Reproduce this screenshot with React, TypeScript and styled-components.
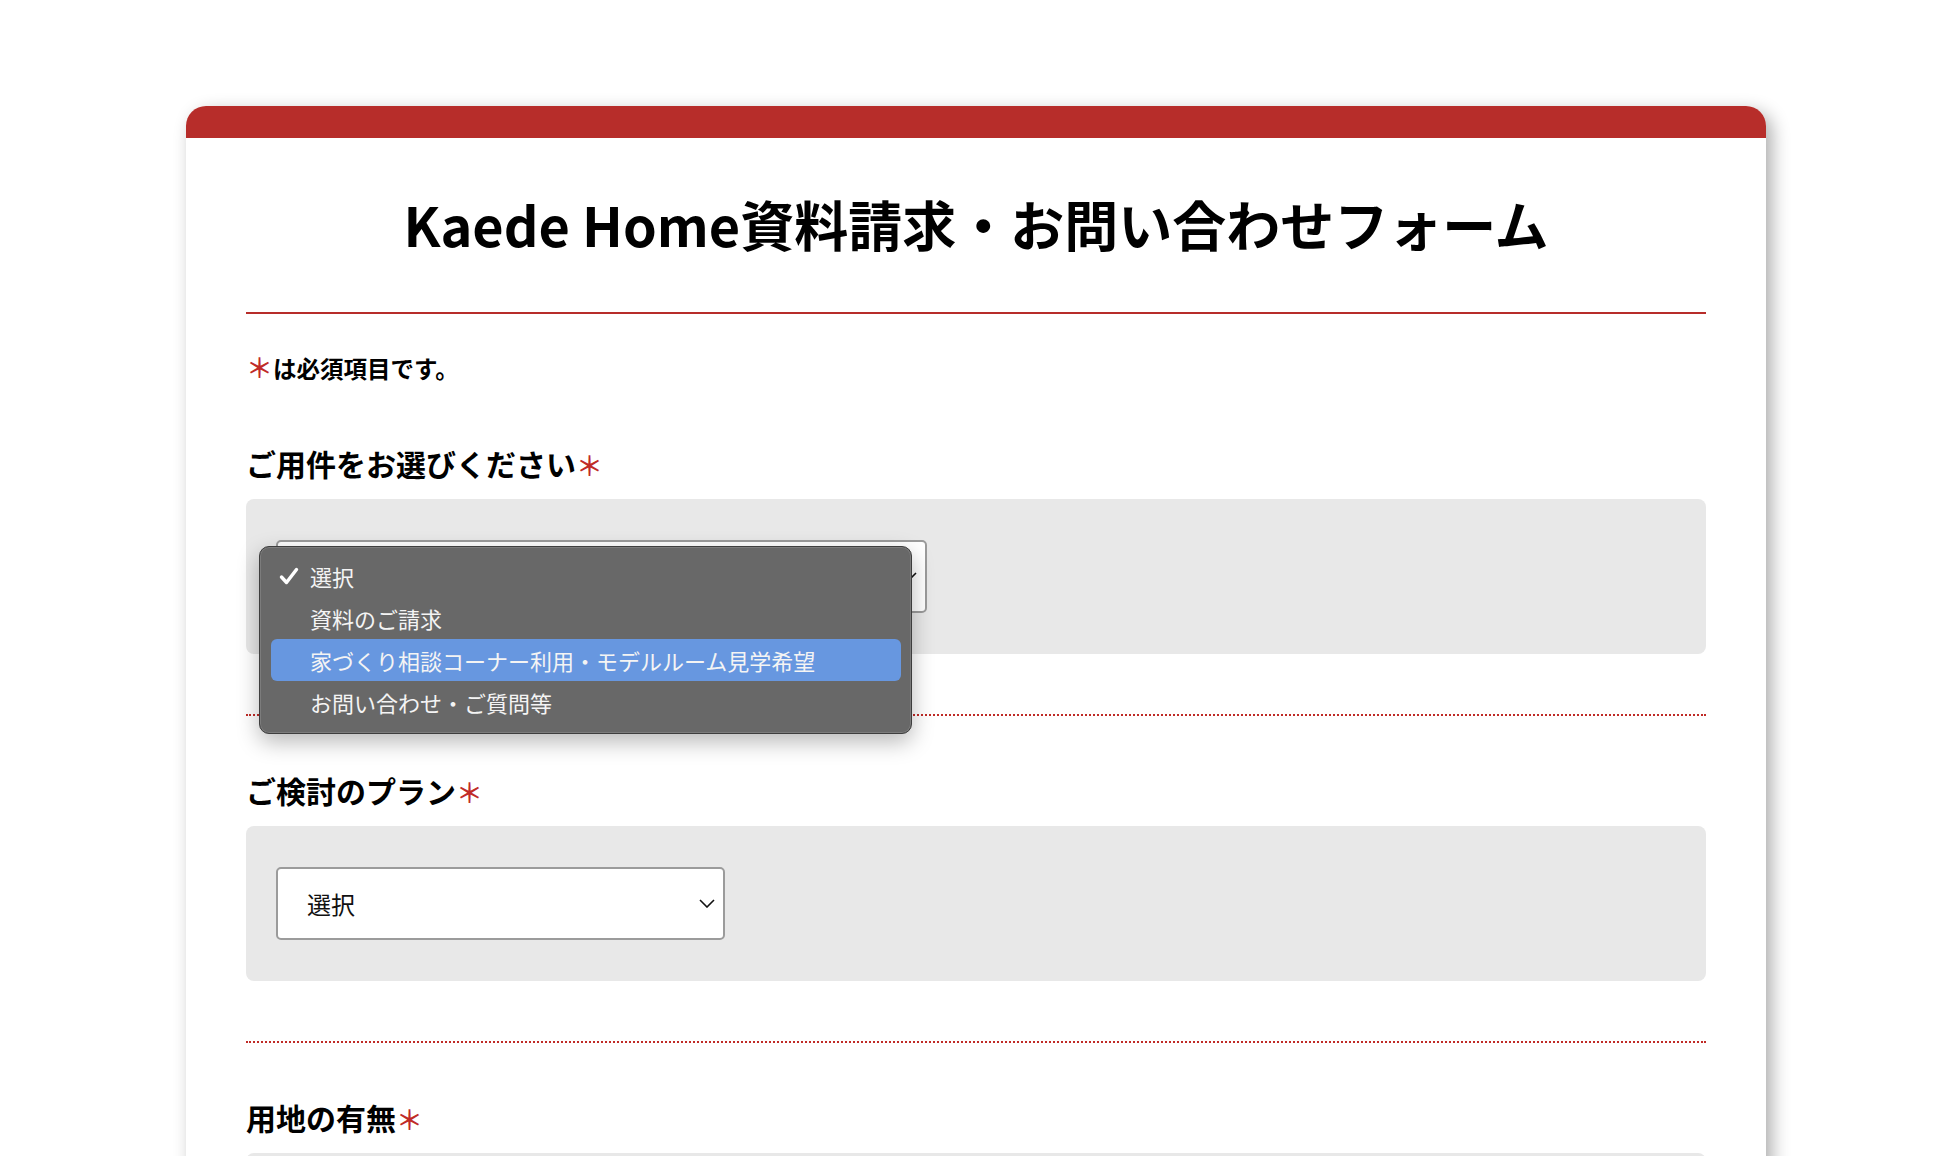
import React from "react";
import styled, { createGlobalStyle } from "styled-components";

const RED = "#b72d2a";

const GlobalStyle = createGlobalStyle`
  html, body {
    margin: 0;
    padding: 0;
    background: #ffffff;
  }
  body {
    font-family: "Noto Sans CJK JP", "Noto Sans", sans-serif;
    color: #111;
  }
`;

const purposeOptions = [
  "選択",
  "資料のご請求",
  "家づくり相談コーナー利用・モデルルーム見学希望",
  "お問い合わせ・ご質問等",
];

const Chevron = () => (
  <svg width="16" height="9" viewBox="0 0 16 9" fill="none">
    <path d="M1 1 L8 8 L15 1" stroke="#111" strokeWidth="1.6" />
  </svg>
);

const Check = () => (
  <svg width="20" height="18" viewBox="0 0 20 18" fill="none">
    <path
      d="M2.5 10 L7.5 15.5 L17.5 2.5"
      stroke="#fff"
      strokeWidth="3.4"
      strokeLinecap="round"
      strokeLinejoin="round"
    />
  </svg>
);

const App = () => {
  return (
    <Page>
      <GlobalStyle />
      <Card>
        <CardTop />
        <CardBody>
          <Title>Kaede Home資料請求・お問い合わせフォーム</Title>
          <Note>
            <Req>＊</Req>は必須項目です。
          </Note>

          <Section>
            <Label>
              ご用件をお選びください<Req>＊</Req>
            </Label>
            <Panel>
              <SelectWrap>
                <SelectBox $width={651}>
                  <span />
                  <Chevron />
                </SelectBox>
                <Menu>
                  {purposeOptions.map((opt, i) => (
                    <MenuItem key={opt} $active={i === 2}>
                      <CheckSlot>{i === 0 && <Check />}</CheckSlot>
                      {opt}
                    </MenuItem>
                  ))}
                </Menu>
              </SelectWrap>
            </Panel>
          </Section>

          <Section>
            <Label>
              ご検討のプラン<Req>＊</Req>
            </Label>
            <Panel>
              <SelectBox $width={449}>
                <span>選択</span>
                <Chevron />
              </SelectBox>
            </Panel>
          </Section>

          <Section>
            <Label>
              用地の有無<Req>＊</Req>
            </Label>
            <Panel>
              <SelectBox $width={449}>
                <span>選択</span>
                <Chevron />
              </SelectBox>
            </Panel>
          </Section>
        </CardBody>
      </Card>
    </Page>
  );
};

export default App;

const Page = styled.div`
  display: flex;
  justify-content: center;
  padding: 106px 6px 0 0;
  height: 1156px;
  box-sizing: border-box;
  overflow: hidden;
`;

const Card = styled.div`
  width: 1580px;
  background: #fff;
  border-radius: 20px 20px 0 0;
  box-shadow: 6px 6px 18px rgba(0, 0, 0, 0.32);
  align-self: flex-start;
`;

const CardTop = styled.div`
  height: 32px;
  background: ${RED};
  border-radius: 20px 20px 0 0;
`;

const CardBody = styled.div`
  padding: 0 60px 200px;
`;

const Title = styled.h1`
  margin: 0;
  padding: 48px 0 51px;
  font-size: 54px;
  line-height: 75px;
  font-weight: 700;
  text-align: center;
  color: #000;
  border-bottom: 2px solid ${RED};
`;

const Note = styled.p`
  margin: 38px 0 4px;
  font-size: 23.5px;
  line-height: 33px;
  font-weight: 700;
  color: #000;
`;

const Req = styled.span`
  color: #c02b27;
  font-size: 27px;
  line-height: 1;
  font-weight: 500;
`;

const Section = styled.section`
  padding: 52px 0 60px;
  border-bottom: 2px dotted #c02b27;
`;

const Label = styled.h2`
  margin: 0 0 13px;
  font-size: 30px;
  line-height: 45px;
  font-weight: 700;
  color: #000;
`;

const Panel = styled.div`
  background: #e8e8e8;
  border-radius: 8px;
  padding: 41px 30px;
`;

const SelectWrap = styled.div`
  position: relative;
  width: fit-content;
`;

const SelectBox = styled.div<{ $width: number }>`
  width: ${(p) => p.$width}px;
  height: 73px;
  box-sizing: border-box;
  display: flex;
  align-items: center;
  justify-content: space-between;
  padding: 0 8px 0 29px;
  background: #fff;
  border: 2px solid #9b9b9b;
  border-radius: 5px;
  font-size: 24px;
  color: #111;
`;

const Menu = styled.div`
  position: absolute;
  left: -17px;
  top: 6px;
  width: 653px;
  box-sizing: border-box;
  padding: 8px 10px 10px 11px;
  background: #686868;
  border: 1px solid #3e3e3e;
  border-radius: 10px;
  box-shadow: inset 0 0 0 1px #7c7c7c, 0 8px 22px rgba(0, 0, 0, 0.28);
`;

const MenuItem = styled.div<{ $active?: boolean }>`
  display: flex;
  align-items: center;
  height: 42px;
  padding-left: 8px;
  border-radius: 6px;
  background: ${(p) => (p.$active ? "#6797e0" : "transparent")};
  color: #f4f4f4;
  font-size: 22px;
`;

const CheckSlot = styled.span`
  display: inline-flex;
  width: 31px;
  align-items: center;
`;
